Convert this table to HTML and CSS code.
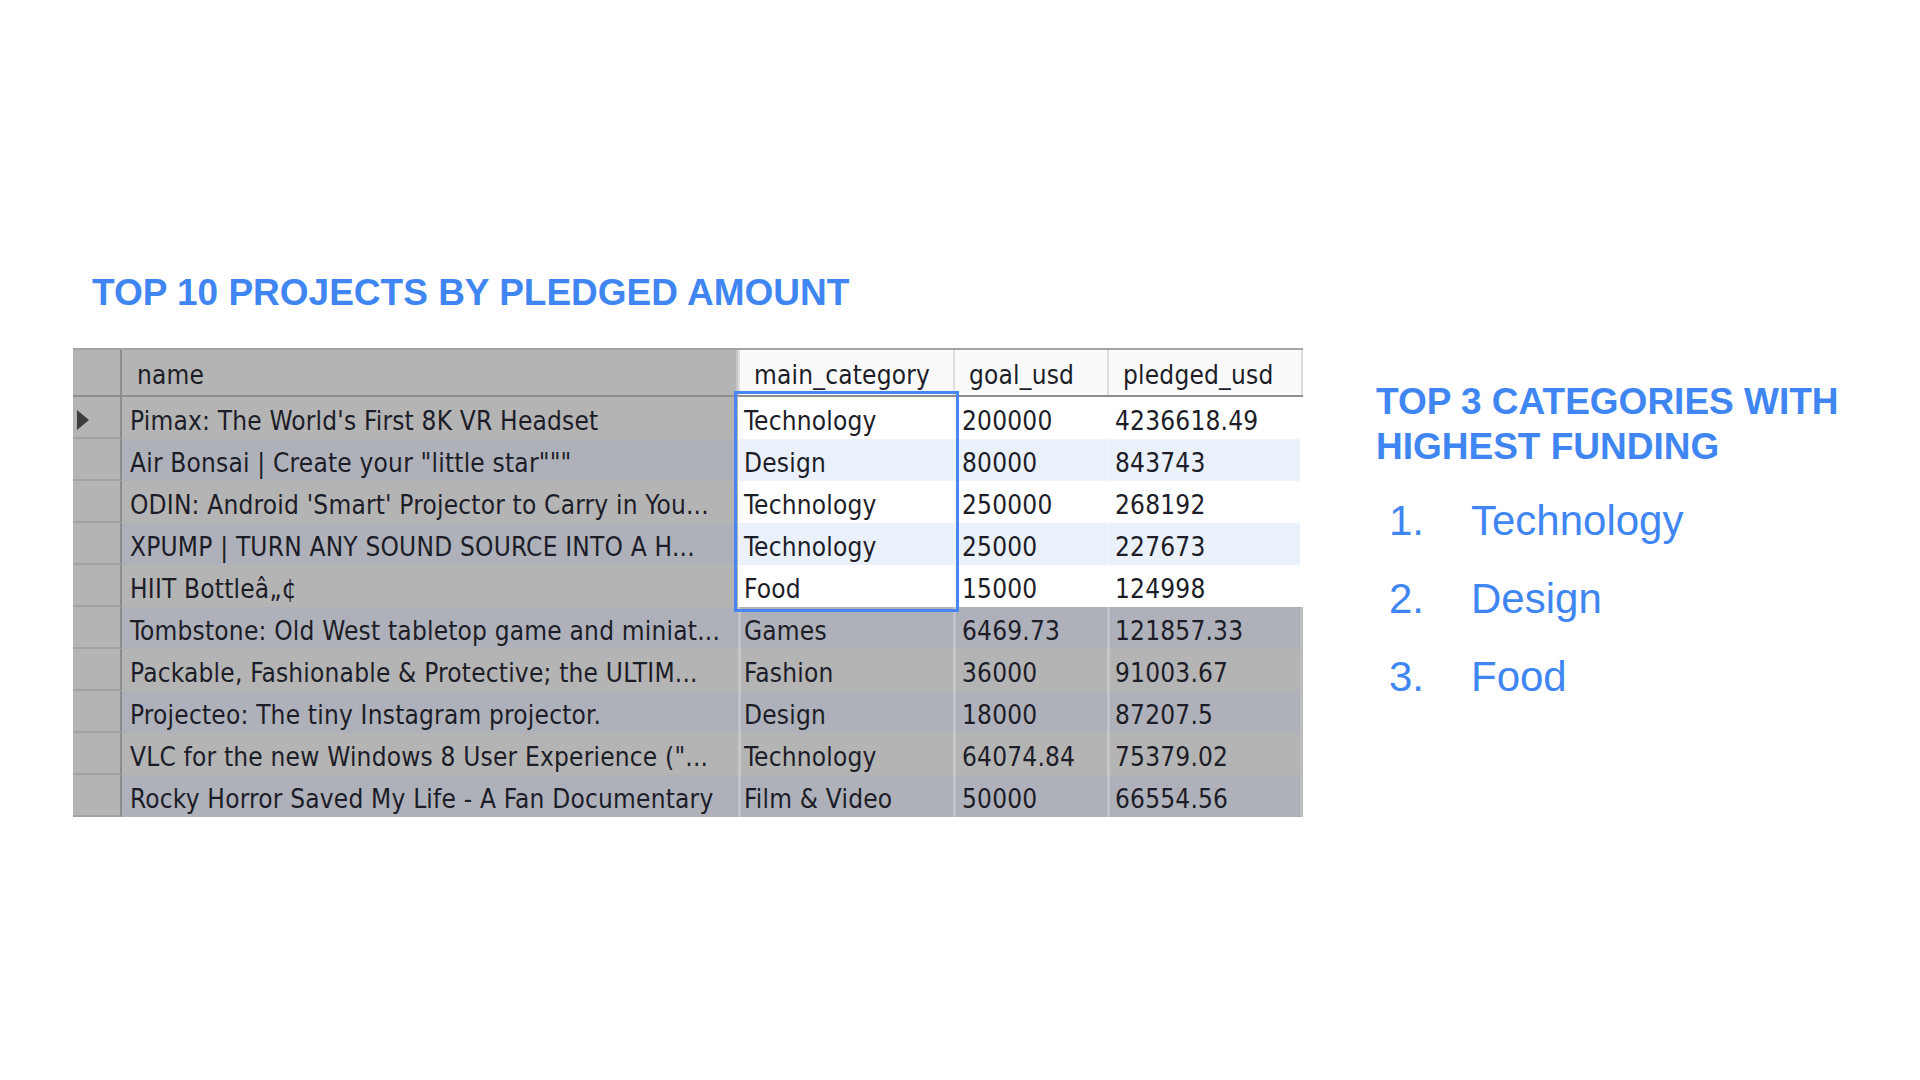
FILE: index.html
```html
<!DOCTYPE html>
<html lang="en">
<head>
<meta charset="utf-8">
<title>Top projects</title>
<link rel="stylesheet" href="styles.css">
</head>
<body>
<div class="slide">
  <section class="left">
    <h1 class="title">TOP 10 PROJECTS BY PLEDGED AMOUNT</h1>
    <div class="grid">
      <div class="row head">
        <div class="c sel"></div>
        <div class="c name">name</div>
        <div class="c">main_category</div>
        <div class="c">goal_usd</div>
        <div class="c">pledged_usd</div>
      </div>
      <div class="row lit">
        <div class="c sel"><span class="arrow"></span></div>
        <div class="c name">Pimax: The World's First 8K VR Headset</div>
        <div class="c cat">Technology</div>
        <div class="c goal">200000</div>
        <div class="c pl">4236618.49</div>
      </div>
      <div class="row lit alt">
        <div class="c sel"></div>
        <div class="c name">Air Bonsai | Create your "little star"""</div>
        <div class="c cat">Design</div>
        <div class="c goal">80000</div>
        <div class="c pl">843743</div>
      </div>
      <div class="row lit">
        <div class="c sel"></div>
        <div class="c name">ODIN: Android 'Smart' Projector to Carry in You...</div>
        <div class="c cat">Technology</div>
        <div class="c goal">250000</div>
        <div class="c pl">268192</div>
      </div>
      <div class="row lit alt">
        <div class="c sel"></div>
        <div class="c name">XPUMP | TURN ANY SOUND SOURCE INTO A H...</div>
        <div class="c cat">Technology</div>
        <div class="c goal">25000</div>
        <div class="c pl">227673</div>
      </div>
      <div class="row lit">
        <div class="c sel"></div>
        <div class="c name">HIIT Bottleâ„¢</div>
        <div class="c cat">Food</div>
        <div class="c goal">15000</div>
        <div class="c pl">124998</div>
      </div>
      <div class="row dim alt">
        <div class="c sel"></div>
        <div class="c name">Tombstone: Old West tabletop game and miniat...</div>
        <div class="c cat">Games</div>
        <div class="c goal">6469.73</div>
        <div class="c pl">121857.33</div>
      </div>
      <div class="row dim">
        <div class="c sel"></div>
        <div class="c name">Packable, Fashionable &amp; Protective; the ULTIM...</div>
        <div class="c cat">Fashion</div>
        <div class="c goal">36000</div>
        <div class="c pl">91003.67</div>
      </div>
      <div class="row dim alt">
        <div class="c sel"></div>
        <div class="c name">Projecteo: The tiny Instagram projector.</div>
        <div class="c cat">Design</div>
        <div class="c goal">18000</div>
        <div class="c pl">87207.5</div>
      </div>
      <div class="row dim">
        <div class="c sel"></div>
        <div class="c name">VLC for the new Windows 8 User Experience ("...</div>
        <div class="c cat">Technology</div>
        <div class="c goal">64074.84</div>
        <div class="c pl">75379.02</div>
      </div>
      <div class="row dim alt">
        <div class="c sel"></div>
        <div class="c name">Rocky Horror Saved My Life - A Fan Documentary</div>
        <div class="c cat">Film &amp; Video</div>
        <div class="c goal">50000</div>
        <div class="c pl">66554.56</div>
      </div>
      <div class="highlight"></div>
    </div>
  </section>
  <section class="right">
    <h2 class="subtitle">TOP 3 CATEGORIES WITH HIGHEST FUNDING</h2>
    <ol class="ranks">
      <li><span class="num">1.</span><span>Technology</span></li>
      <li><span class="num">2.</span><span>Design</span></li>
      <li><span class="num">3.</span><span>Food</span></li>
    </ol>
  </section>
</div>
</body>
</html>
```
FILE: styles.css
```css
html, body {
  margin: 0;
  padding: 0;
  background: #ffffff;
}
body {
  width: 1920px;
  height: 1080px;
  overflow: hidden;
  font-family: "Liberation Sans", Arial, sans-serif;
}
.slide {
  display: flex;
  align-items: flex-start;
  padding: 274px 0 0 73px;
}
.left {
  display: flex;
  flex-direction: column;
}
.title {
  margin: 0 0 37px 19px;
  font-size: 37px;
  line-height: 37px;
  font-weight: 700;
  color: #4086f2;
}
.grid {
  position: relative;
  width: 1230px;
  font-family: "DejaVu Sans Condensed", "DejaVu Sans", sans-serif;
  font-stretch: condensed;
  font-size: 26px;
  letter-spacing: 0.2px;
  color: #1d1d28;
}
.row {
  display: grid;
  grid-template-columns: 49px 616px 215px 154px 196px;
  height: 42px;
}
.c {
  box-sizing: border-box;
  height: 42px;
  padding-top: 3px;
  line-height: 42px;
  white-space: nowrap;
  overflow: hidden;
  padding-left: 7px;
  border-left: 3px solid rgba(255, 255, 255, 0.25);
}
.c.sel {
  padding-top: 0;
  border-left: none;
  background: #b4b4b4;
  border-right: 2px solid #8c8c8c;
  border-bottom: 2px solid #a2a2a2;
  padding-left: 4px;
}
.c.name {
  border-left: none;
  padding-left: 8px;
}
.c.cat { padding-left: 3px; }
.c.goal { padding-left: 6px; }
.c.pl { padding-left: 5px; }

/* header */
.row.head {
  height: 49px;
  box-sizing: border-box;
  border-top: 2px solid #a4a4a4;
  border-bottom: 2px solid #8e8e8e;
}
.row.head .c {
  height: 45px;
  padding-top: 3px;
  line-height: 45px;
  padding-left: 14px;
  background: #fafafa;
  border-left: 2px solid #dedede;
}
.row.head .c.sel {
  padding-top: 0;
  background: #b4b4b4;
  border-left: none;
  border-bottom: none;
  padding-left: 0;
}
.row.head .c.name {
  background: #b4b4b4;
  border-left: none;
  border-right: 2px solid #c6c6c6;
  padding-left: 15px;
}
.row.head .c:last-child {
  border-right: 2px solid #dedede;
}

/* body rows */
.row.lit .c { background: #ffffff; }
.row.lit.alt .c { background: #eaf1fb; }
.row.lit .c.name { background: #b4b4b4; }
.row.lit.alt .c.name { background: #aeb1b9; }
.row.lit .c:last-child { border-right: 3px solid #ffffff; }
.row.dim .c { background: #b4b4b4; }
.row.dim.alt .c { background: #aeb1b9; }
.row.dim .c:last-child { border-right: 3px solid #bdbdbd; }
.row .c.sel, .row.dim.alt .c.sel, .row.lit.alt .c.sel { background: #b4b4b4; }

.arrow {
  display: inline-block;
  width: 0;
  height: 0;
  margin-top: 13px;
  border-top: 10px solid transparent;
  border-bottom: 10px solid transparent;
  border-left: 12px solid #3c3c3c;
  vertical-align: top;
}

.highlight {
  position: absolute;
  left: 661px;
  top: 43px;
  width: 225px;
  height: 221px;
  box-sizing: border-box;
  border: 3px solid #4a86f0;
  pointer-events: none;
}

/* right column */
.right {
  margin: 105px 0 0 73px;
  color: #4086f2;
}
.subtitle {
  margin: 0 0 13px 0;
  width: 490px;
  font-size: 37px;
  line-height: 45px;
  font-weight: 700;
}
.ranks {
  list-style: none;
  margin: 0;
  padding: 0;
  font-size: 42px;
  line-height: 78px;
}
.ranks li {
  display: grid;
  grid-template-columns: 95px auto;
}
.ranks .num {
  padding-left: 13px;
}
```
